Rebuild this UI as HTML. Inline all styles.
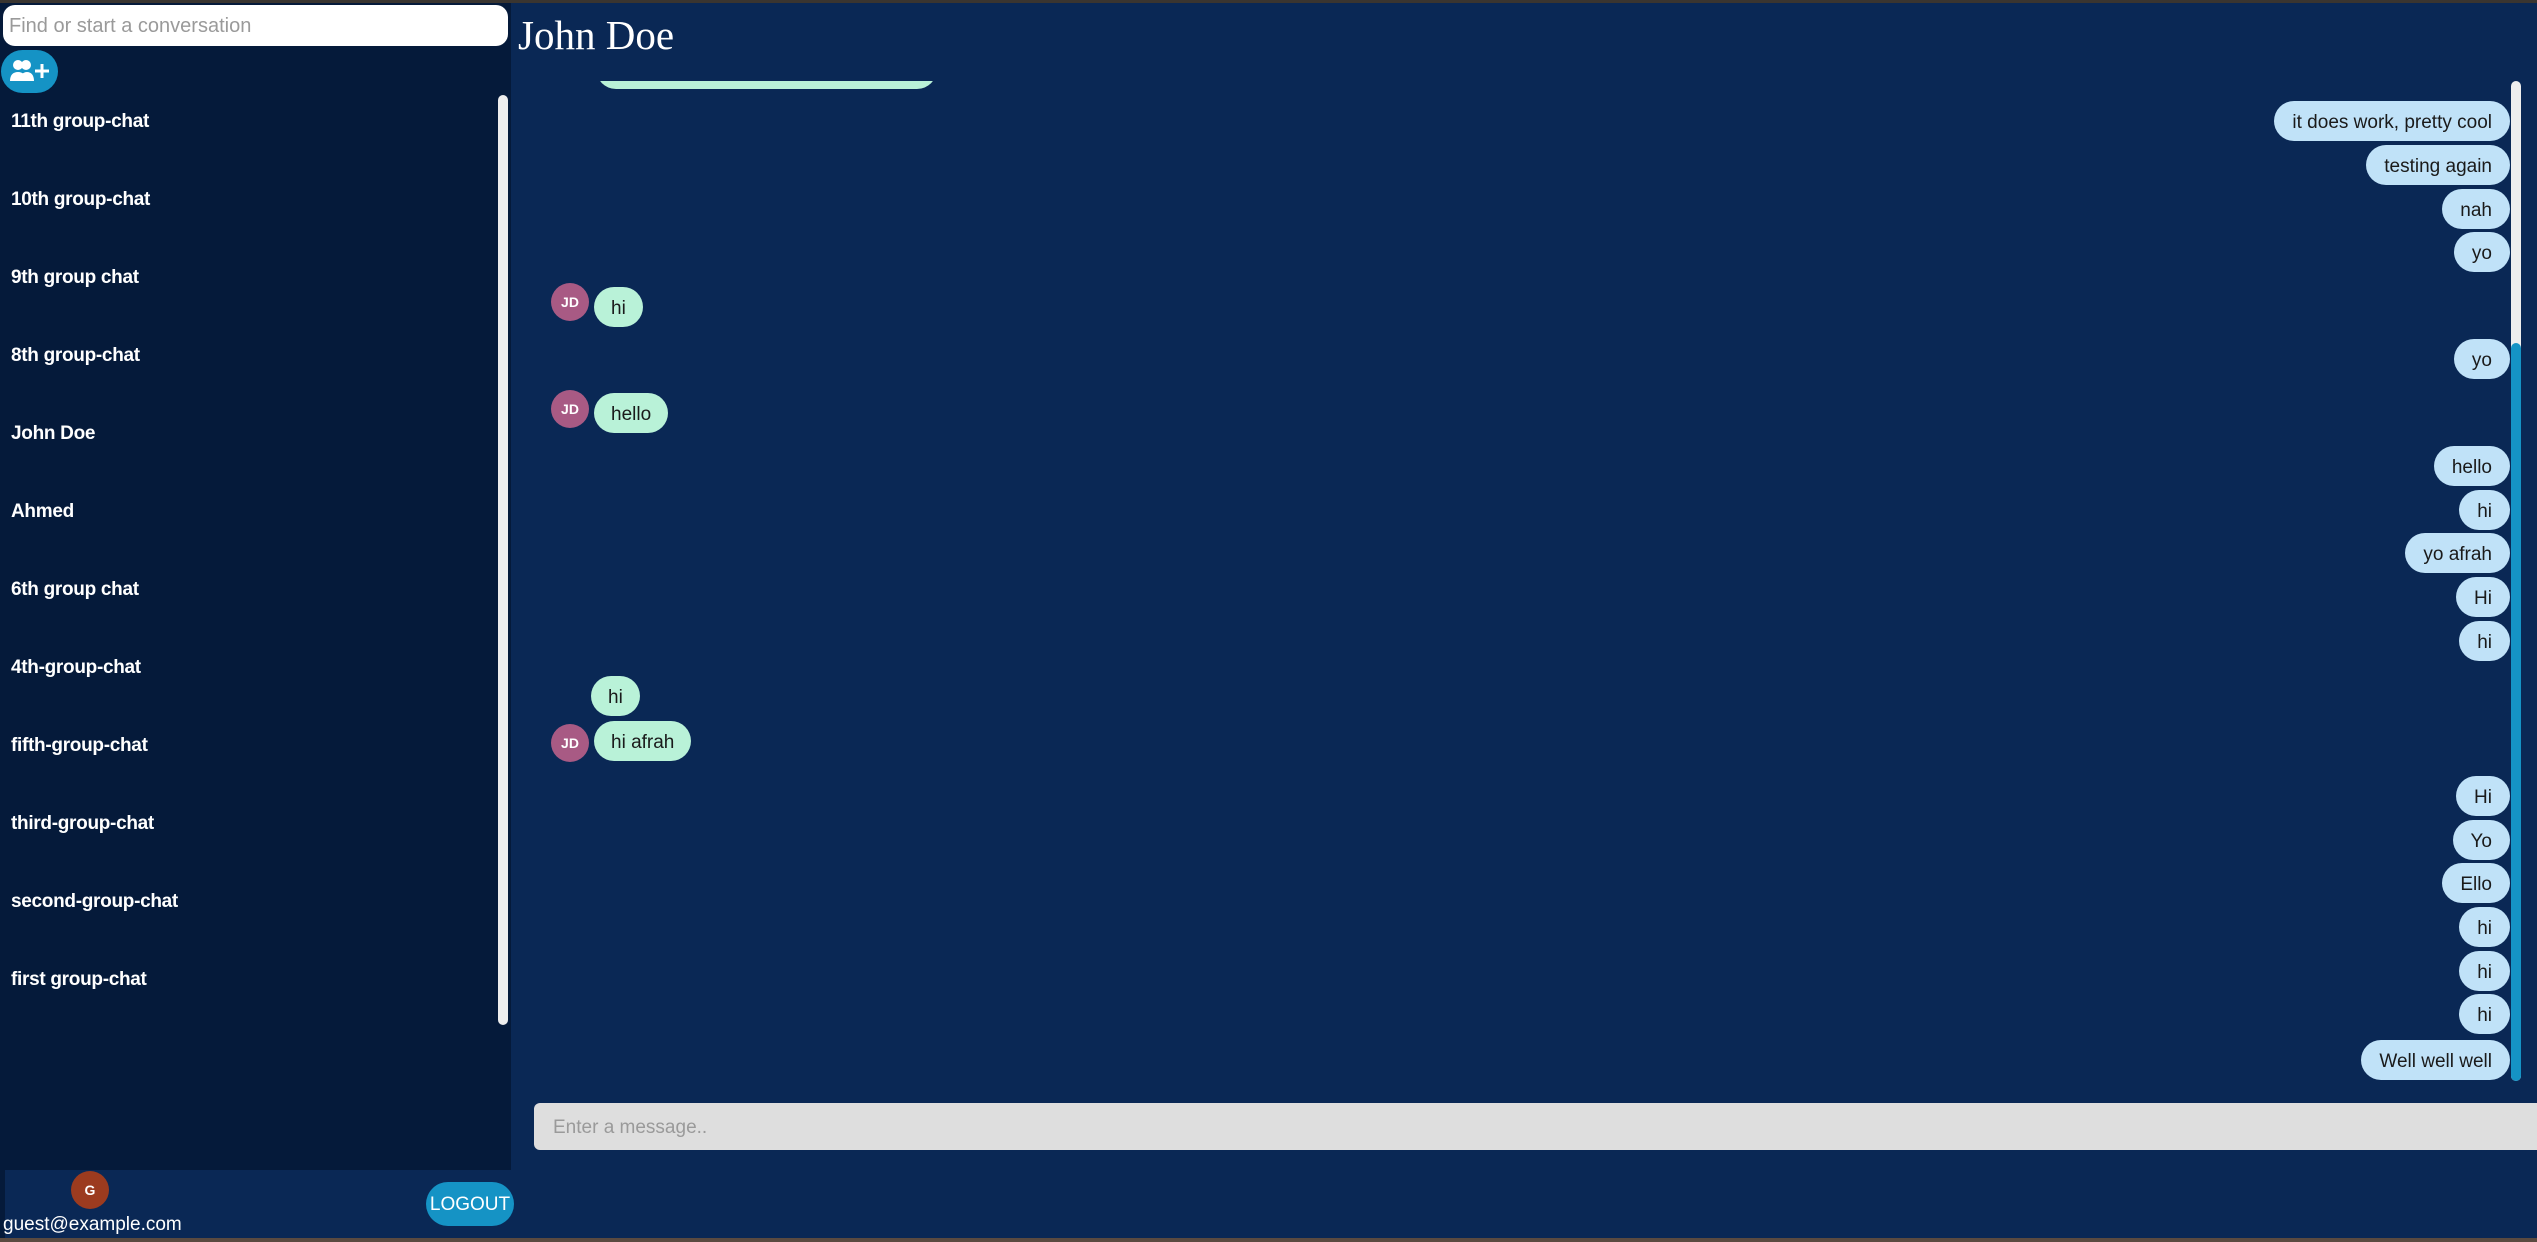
<!DOCTYPE html>
<html><head><meta charset="utf-8"><style>
*{box-sizing:border-box;margin:0;padding:0}
body{width:2537px;height:1242px;background:#0a2855;font-family:"Liberation Sans",sans-serif;position:relative;overflow:hidden}
.topb{position:absolute;left:0;top:0;width:2537px;height:3px;background:#3a3530;z-index:5}
.botb{position:absolute;left:0;top:1238px;width:2537px;height:4px;background:#5a4a40;z-index:5}
.side{position:absolute;left:0;top:3px;width:511px;height:1235px;background:#051a3a}
.search{position:absolute;left:3px;top:5px;width:505px;height:41px;background:#fff;border-radius:12px;color:#9a9a9a;font-size:20px;line-height:43px;padding-left:6px}
.add{position:absolute;left:1px;top:50px;width:57px;height:43px;border-radius:22px;background:#1593c5}
.item{position:absolute;left:11px;color:#fff;font-size:19px;font-weight:bold;letter-spacing:-0.3px}
.sbar{position:absolute;left:498px;top:95px;width:10px;height:930px;background:#eee;border-radius:5px}
.foot{position:absolute;left:5px;top:1170px;width:506px;height:68px;background:#0a2855}
.av{position:absolute;border-radius:50%;color:#fff;font-weight:bold;text-align:center}
.logout{position:absolute;left:426px;top:1182px;width:88px;height:44px;border-radius:22px;background:#1593c5;color:#fff;font-size:19px;line-height:46px;text-align:center}
.title{position:absolute;left:518px;top:11px;color:#fff;font-family:"Liberation Serif",serif;font-size:41px}
.r{position:absolute;right:27px;height:40px;line-height:43px;padding:0 18px;border-radius:20px;background:#c0e2f8;color:#1a1a1a;font-size:19px;white-space:nowrap}
.l{position:absolute;height:40px;line-height:43px;padding:0 17px;border-radius:20px;background:#b9f2d8;color:#1a1a1a;font-size:19px;white-space:nowrap}
.jd{width:38px;height:38px;line-height:38px;background:#a85a84;font-size:14px}
.mbar{position:absolute;left:2511px;top:81px;width:10px;height:1000px;background:#eee;border-radius:5px}
.mthumb{position:absolute;left:2511px;top:343px;width:10px;height:738px;background:#1593c5;border-radius:5px}
.input{position:absolute;left:534px;top:1103px;width:2010px;height:47px;background:#dedede;border-radius:6px;color:#9a9a9a;font-size:19px;line-height:50px;padding-left:19px}
</style></head><body>
<div class="side"></div>
<div class="search">Find or start a conversation</div>
<div class="add"><svg width="57" height="43" viewBox="0 0 57 43"><circle cx="17" cy="15" r="5" fill="#fff"/><circle cx="25" cy="15" r="5" fill="#fff"/><path d="M9 31c0-6 3-9 8-9s8 3 8 9z" fill="#fff"/><path d="M19 31c0-6 3-9 7-9s7 3 7 9z" fill="#fff"/><path d="M41 14v14M34 21h14" stroke="#fff" stroke-width="3"/></svg></div>
<div class="sbar"></div>
<div class="item" style="top:111px">11th group-chat</div>
<div class="item" style="top:189px">10th group-chat</div>
<div class="item" style="top:267px">9th group chat</div>
<div class="item" style="top:345px">8th group-chat</div>
<div class="item" style="top:423px">John Doe</div>
<div class="item" style="top:501px">Ahmed</div>
<div class="item" style="top:579px">6th group chat</div>
<div class="item" style="top:657px">4th-group-chat</div>
<div class="item" style="top:735px">fifth-group-chat</div>
<div class="item" style="top:813px">third-group-chat</div>
<div class="item" style="top:891px">second-group-chat</div>
<div class="item" style="top:969px">first group-chat</div>
<div class="foot"></div>
<div class="av" style="left:71px;top:1171px;width:38px;height:38px;line-height:38px;background:#9c3b1f;font-size:14px">G</div>
<div style="position:absolute;left:3px;top:1214px;color:#fff;font-size:19px">guest@example.com</div>
<div class="logout">LOGOUT</div>
<div style="position:absolute;left:596px;top:49px;width:341px;height:40px;border-radius:20px;background:#b9f2d8"></div>
<div style="position:absolute;left:534px;top:0;width:1980px;height:81px;background:#0a2855"></div>
<div class="title">John Doe</div>
<div class="mbar"></div><div class="mthumb"></div>
<div class="r" style="top:101px">it does work, pretty cool</div>
<div class="r" style="top:145px">testing again</div>
<div class="r" style="top:189px">nah</div>
<div class="r" style="top:232px">yo</div>
<div class="r" style="top:339px">yo</div>
<div class="r" style="top:446px">hello</div>
<div class="r" style="top:490px">hi</div>
<div class="r" style="top:533px">yo afrah</div>
<div class="r" style="top:577px">Hi</div>
<div class="r" style="top:621px">hi</div>
<div class="r" style="top:776px">Hi</div>
<div class="r" style="top:820px">Yo</div>
<div class="r" style="top:863px">Ello</div>
<div class="r" style="top:907px">hi</div>
<div class="r" style="top:951px">hi</div>
<div class="r" style="top:994px">hi</div>
<div class="r" style="top:1040px">Well well well</div>
<div class="av jd" style="left:551px;top:283px">JD</div>
<div class="l" style="left:594px;top:287px">hi</div>
<div class="av jd" style="left:551px;top:390px">JD</div>
<div class="l" style="left:594px;top:393px">hello</div>
<div class="l" style="left:591px;top:676px">hi</div>
<div class="av jd" style="left:551px;top:724px">JD</div>
<div class="l" style="left:594px;top:721px">hi afrah</div>
<div class="input">Enter a message..</div>
<div class="topb"></div>
<div class="botb"></div>
</body></html>
